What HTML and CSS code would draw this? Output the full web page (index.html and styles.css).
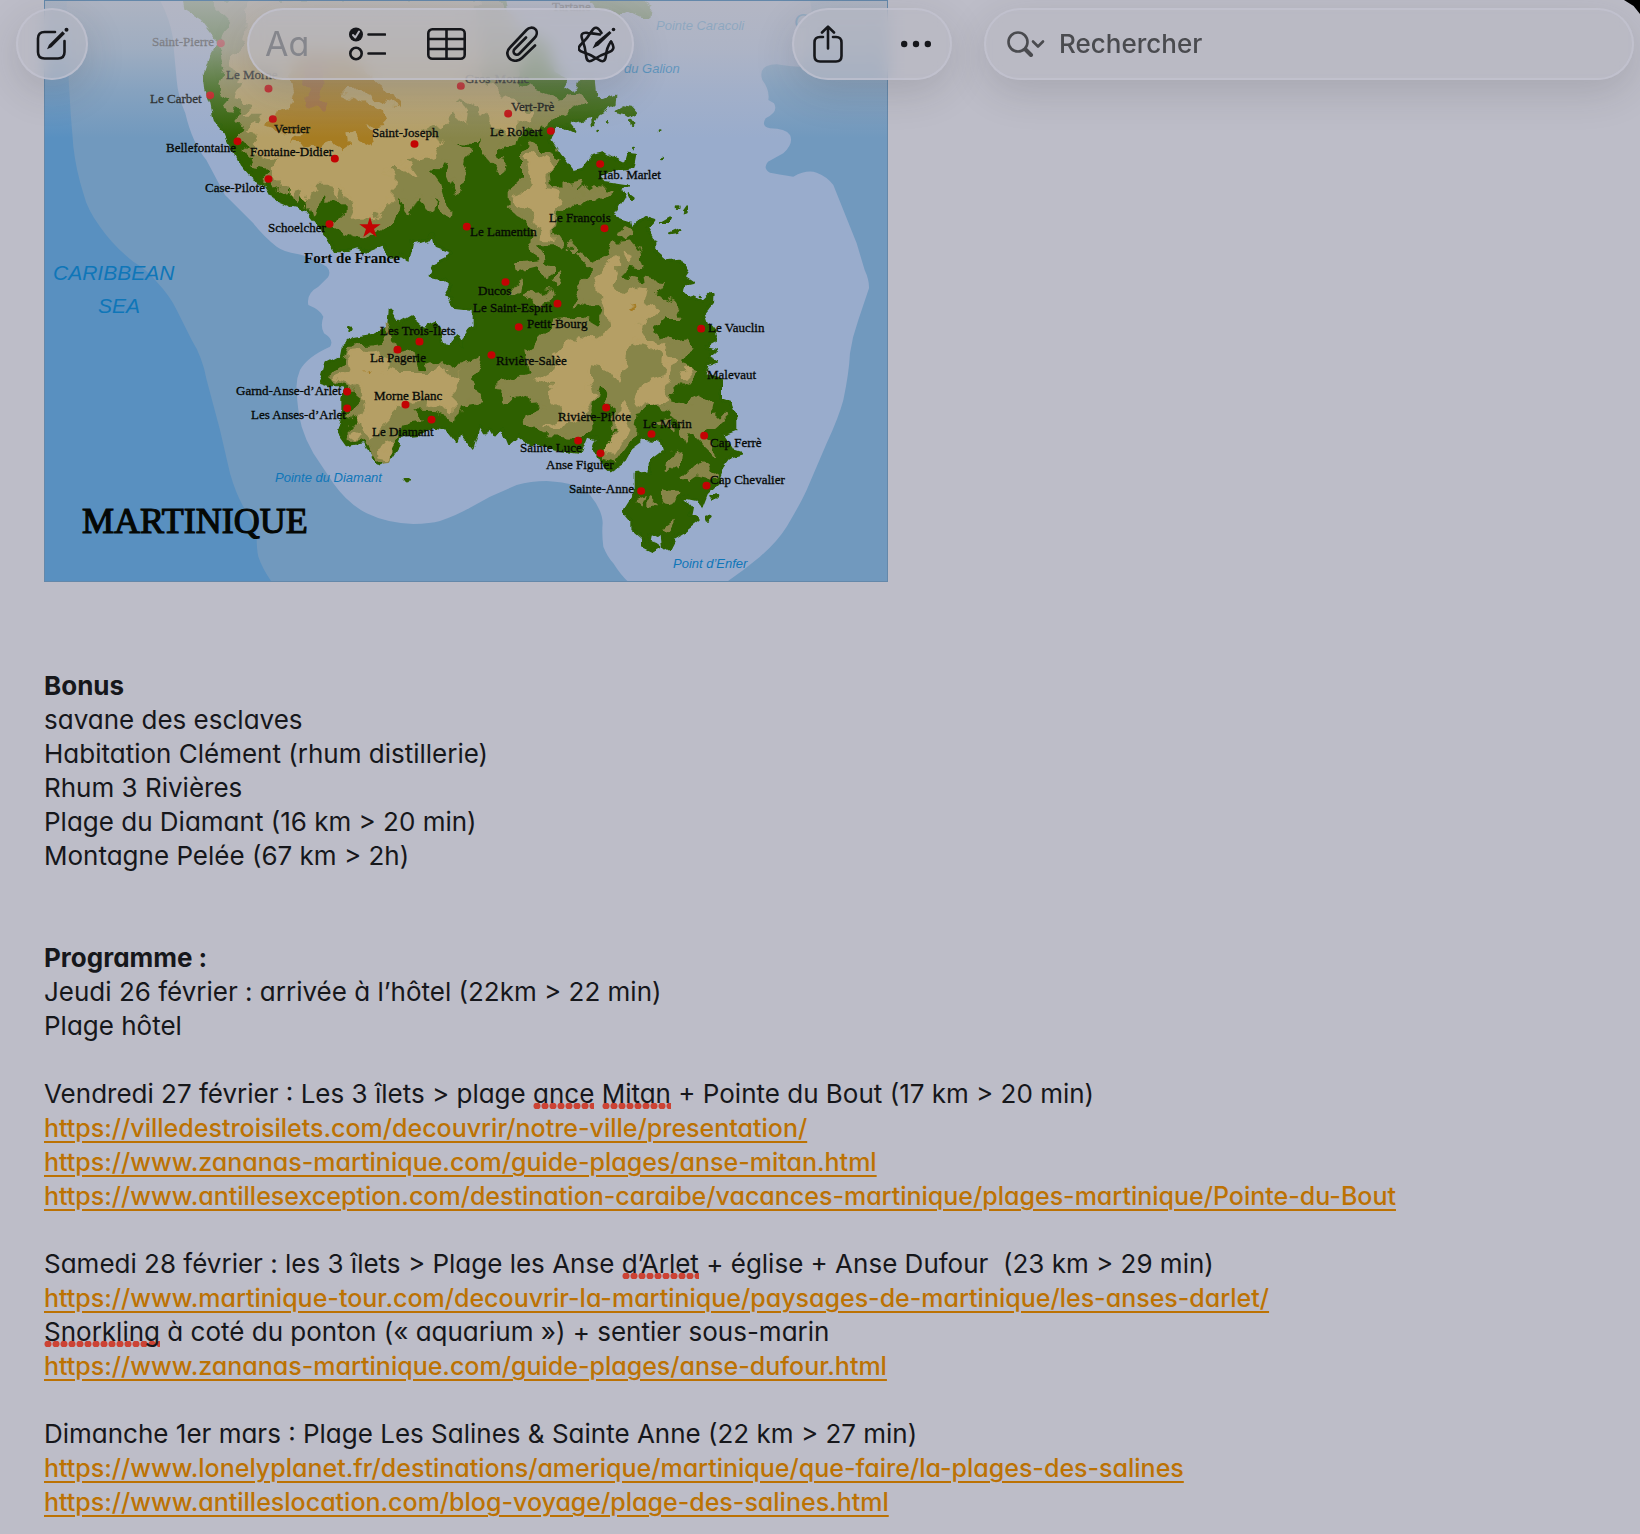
FILE: index.html
```html
<!DOCTYPE html>
<html lang="fr">
<head>
    <meta charset="UTF-8">
    <meta name="viewport" content="width=device-width, initial-scale=1.0">
    <title>Martinique</title>
    <link rel="stylesheet" href="styles.css">
</head>
<body>
    <header class="toolbar">
        <div class="pill pill-new">
            <button type="button" aria-label="Nouvelle note">
                <svg width="34" height="34" viewBox="0 0 34 34" class="icon">
                    <path d="M20 5H9.500Q3 5 3 11.500V25Q3 31.500 9.500 31.500H23Q29.500 31.500 29.500 25V14"/>
                    <path class="solid" d="M27.500 4.200L30 6.700L16.500 20.200L12 22.200L14 17.700Z"/>
                    <circle class="solid" cx="31.500" cy="2.800" r="2"/>
                </svg>
            </button>
        </div>

        <div class="pill pill-format">
            <button type="button" class="aa" aria-label="Format">Aa</button>
            <button type="button" aria-label="Liste de contrôle">
                <svg width="37" height="34" viewBox="0 0 37 34" class="icon">
                    <circle class="solid" cx="7" cy="7.500" r="7"/>
                    <path class="tick" d="M4 8L6.300 10.500L10 4.500"/>
                    <circle cx="7" cy="26.500" r="5.700"/>
                    <path d="M19.500 7.500H36M19.500 26.500H36"/>
                </svg>
            </button>
            <button type="button" aria-label="Tableau">
                <svg width="39" height="34" viewBox="0 0 39 34" class="icon">
                    <rect x="1.300" y="2.300" width="36.400" height="29.400" rx="4"/>
                    <path d="M19.500 2.300V31.700M1.300 12H37.700M1.300 22H37.700"/>
                </svg>
            </button>
            <button type="button" aria-label="Pièce jointe">
                <svg width="32" height="36" viewBox="0 0 32 36" class="icon">
                    <path d="M29 19.500L16 32C12 36 5.500 35.500 2.800 31.500C0.500 28 1 24.500 4 21.500L20.500 4C23 1.300 27 0.800 29.300 3.200C31.700 5.700 31 9.300 28.500 12L13.500 27.500C12 29 9.800 29 8.500 27.800C7.200 26.500 7.200 24.500 8.700 23L20 11.500"/>
                </svg>
            </button>
            <button type="button" aria-label="Outils d’écriture">
                <svg width="38" height="38" viewBox="0 0 38 38" class="icon">
                    <path d="M33 16.500Q38.800 24.700 30.700 27.200Q22.700 29.800 15.700 34.500Q8.800 39.200 8.100 30.800Q7.400 22.400 4.300 14.500Q1.300 6.700 9.600 7.900Q16 8.500 22 9.500"/>
                    <path d="M33 16.500Q28.600 22.400 27.900 30.800Q27.200 39.200 20.300 34.500Q13.300 29.800 5.300 27.300Q-2.800 24.700 3.400 19Q9.500 13.200 13.800 6Q18 -1.300 23.500 8"/>
                    <path class="solid" d="M31.500 6L33.500 8L20.500 20.500L14.500 23.500L17.500 17.500Z"/>
                    <circle class="solid" cx="35.500" cy="4.500" r="1.800"/>
                </svg>
            </button>
        </div>

        <div class="pill pill-share">
            <button type="button" aria-label="Partager">
                <svg width="30" height="38" viewBox="0 0 30 38" class="icon">
                    <path d="M10 12H7Q1.500 12 1.500 17.500V31Q1.500 36.500 7 36.500H23Q28.500 36.500 28.500 31V17.500Q28.500 12 23 12H20"/>
                    <path d="M15 23.500V1.800M9 7.500L15 1.600L21 7.500"/>
                </svg>
            </button>
            <button type="button" aria-label="Plus">
                <svg width="30" height="8" viewBox="0 0 30 8" class="icon">
                    <circle class="solid" cx="3.200" cy="4" r="3.200"/>
                    <circle class="solid" cx="15" cy="4" r="3.200"/>
                    <circle class="solid" cx="26.800" cy="4" r="3.200"/>
                </svg>
            </button>
        </div>

        <label class="pill search">
            <svg width="38" height="26" viewBox="0 0 38 26" class="icon search-icon">
                <circle cx="11" cy="11" r="9.500"/>
                <path class="handle" d="M18.500 18.500L24 24"/>
                <path d="M26 10.500L31 15.500L36 10.500"/>
            </svg>
            <input type="search" placeholder="Rechercher" aria-label="Rechercher">
        </label>
    </header>
    <div class="corner"></div>

    <main class="note">
        <figure class="map">
            <svg viewBox="0 0 844 582" role="img" aria-label="Carte de la Martinique">
                <defs>
                    <linearGradient id="fade" x1="0" y1="0" x2="0" y2="1">
                        <stop offset="0" stop-color="#b8b8c2" stop-opacity=".85"/>
                        <stop offset=".35" stop-color="#b8b8c2" stop-opacity=".65"/>
                        <stop offset=".65" stop-color="#b8b8c2" stop-opacity=".3"/>
                        <stop offset="1" stop-color="#b8b8c2" stop-opacity="0"/>
                    </linearGradient>
                    <!-- breaks up the straight edges of the relief -->
                    <filter id="rough" x="0" y="0" width="1" height="1">
                        <feTurbulence type="fractalNoise" baseFrequency=".025" numOctaves="2" seed="4"/>
                        <feDisplacementMap in="SourceGraphic" scale="50" xChannelSelector="R" yChannelSelector="G"/>
                    </filter>
                    <filter id="coast" x="0" y="0" width="1" height="1">
                        <feTurbulence type="fractalNoise" baseFrequency=".03" numOctaves="2" seed="9"/>
                        <feDisplacementMap in="SourceGraphic" scale="22" xChannelSelector="R" yChannelSelector="G"/>
                    </filter>
                </defs>
                <!-- relief, drawn at three times the label scale -->
                <g transform="scale(.33333)">
                    <rect class="deep" width="2532" height="1746"/>
                    <path class="mid" d="M68 0Q70 140 74 240L80 340L88 440Q96 510 118 580Q130 630 168 680Q210 740 268 785Q310 810 338 845Q380 890 398 930L443 1020Q475 1070 488 1140L528 1290L558 1420Q575 1480 598 1520Q630 1560 638 1610Q638 1650 643 1670Q655 1705 683 1746H2532V0Z"/>
                    <path class="shallow" d="M348 0Q378 60 386 110L398 240Q402 290 424 340Q445 430 487 480L543 585L628 670Q660 710 698 740Q720 756 760 762Q800 770 848 800Q862 815 852 832L823 860Q786 880 793 915Q830 930 838 950Q828 980 840 1000Q872 1020 858 1040Q790 1070 768 1110Q755 1140 758 1170Q760 1230 773 1280Q785 1320 808 1360L868 1450Q910 1510 968 1540Q1030 1570 1108 1572Q1160 1571 1188 1563Q1240 1545 1278 1523L1338 1490L1418 1455Q1460 1443 1508 1443Q1560 1446 1588 1455Q1620 1465 1638 1485Q1675 1530 1676 1570Q1673 1600 1678 1640Q1690 1670 1708 1690Q1730 1725 1753 1746H2048Q2100 1710 2148 1670Q2200 1625 2228 1580Q2270 1510 2288 1470L2348 1330Q2385 1250 2398 1200Q2415 1120 2418 1060Q2425 1010 2443 960L2475 865Q2476 840 2462 810L2438 730L2368 555Q2350 530 2318 518Q2288 508 2248 530Q2200 522 2178 518Q2155 505 2172 485L2218 460Q2250 430 2238 405Q2225 385 2178 385Q2150 380 2165 355Q2205 335 2190 310L2173 300Q2178 270 2155 240Q2140 195 2198 193Q2240 200 2268 200Q2320 110 2298 0Z"/>
                    <g filter="url(#coast)">
                        <rect class="frame" width="2532" height="1746"/>
                        <path class="land" d="M423 0L428 25L468 50L518 115L520 135L498 175L483 220L488 270L503 310L513 360L548 400L568 450L588 490L623 530L668 560L688 595L748 620L788 630L843 700L873 750L908 750L938 740L968 755L1018 735L1033 770L1073 765L1093 780L1103 730L1153 720L1168 700L1178 740L1218 755L1208 775L1168 795L1158 830L1203 840L1223 860L1208 885L1233 920L1278 925L1290 920V980L1278 990L1248 1030L1253 1035L1238 1010L1218 1040L1200 1037L1188 1005L1173 970L1140 985L1098 950L1063 970L1038 930L1033 980L988 1005L928 1015L893 1045L888 1070L848 1090L838 1125L828 1145L858 1155L908 1155L893 1195V1260L883 1300L908 1335L963 1325L988 1380L1008 1392L1038 1375L1063 1335L1068 1310L1118 1305L1168 1278L1208 1285L1238 1325L1248 1295L1288 1345L1308 1280L1323 1305L1338 1280L1353 1305L1373 1282L1393 1332L1423 1305L1458 1330L1538 1345L1608 1355L1628 1305L1658 1315L1648 1345L1663 1375L1703 1410L1733 1390L1758 1345L1798 1315L1848 1320L1858 1355L1818 1385V1415L1773 1420V1480L1738 1535L1763 1565V1585L1798 1615V1640L1823 1652L1848 1638L1813 1625L1818 1600L1838 1610L1853 1600L1858 1640L1873 1650L1893 1610L1918 1595L1963 1560L1938 1550L1943 1525L1913 1490L1958 1500L1973 1518L1988 1480L2018 1450L2038 1400L2063 1368L2093 1360L2063 1350L2033 1305L2073 1290V1250L2058 1210L2030 1200V1140L1983 1125L1993 1095L2018 1085L1990 1072L2018 1050L1983 1040L2018 1020L2008 995L1988 970L1978 940L2003 910L2005 880L1978 905L1948 890L1933 895L1918 880L1923 850L1943 845L1920 830L1930 815L1908 780L1868 785L1833 755V725L1808 685L1830 660L1803 652L1763 685L1758 665L1708 650L1728 610L1740 590L1728 565L1748 560L1683 550L1663 530L1718 510L1768 500L1775 465L1748 462L1740 490L1698 470L1683 460L1643 468L1613 508L1588 515L1548 465L1518 420L1533 380L1563 380L1593 395L1573 370L1648 348L1650 375L1663 340L1708 315L1710 288L1678 302L1653 285L1648 240L1613 240L1603 270L1583 280L1555 262L1568 240L1530 220L1500 120L1400 90L1380 0Z"/>
                        <path class="land" d="M1640 0L1660 25L1700 25L1720 45L1750 30L1790 50L1815 50L1820 20L1780 0Z"/>
                        <path class="land" d="M1713 335L1738 320L1765 325L1778 340L1768 345L1755 350L1740 340ZM1762 360L1770 372L1764 374ZM1752 580L1768 592L1762 602ZM1852 668L1880 652L1872 668ZM1876 702L1908 688L1900 698ZM1918 636L1928 622L1924 634ZM2000 1490L2022 1486L2008 1499ZM1987 1550L2002 1552L1992 1562ZM1082 1438L1094 1438L1088 1446ZM916 985L922 987L919 992Z"/>
                        <path class="land" d="M1686 367h1M1658 393h1M1845 395h1M1768 447h1M1852 477h1M1902 626h1M1971 888h2"/>
                    </g>

                    <g filter="url(#rough)">
                        <rect class="frame" width="2532" height="1746"/>
                        <path class="low" d="M500 0L560 60L545 110L530 150L545 200L530 260L555 300L540 320L600 330L570 370L600 380L590 410L620 430L600 450L640 470L620 500L680 510L668 540L700 535L690 570L740 560L760 605L790 575L808 645L828 580L858 610L903 600V645L868 680L928 705L988 710L1018 690L1058 640L1068 570L1098 650L1128 580L1153 635L1168 590L1208 655L1210 630L1188 560L1148 505L1188 510L1200 480L1228 550L1243 575L1263 500L1273 445L1223 420L1290 425L1308 390L1303 440L1338 480L1373 525L1378 500L1348 455L1383 425L1423 440L1433 390L1478 390L1508 365L1568 335L1618 300L1598 285L1538 300L1458 270L1418 260L1440 100L1360 0Z"/>
                        <path class="low" d="M1438 450L1468 435L1498 455L1543 475L1513 520L1518 565L1560 560L1608 550L1598 580L1658 560L1708 570L1658 600L1598 595L1538 640L1528 690L1558 735L1478 735L1518 800L1508 840L1488 795L1428 810L1423 790L1483 785L1463 730L1468 680L1438 650L1398 620V575L1438 540ZM1400 860L1430 840L1425 870L1405 885ZM1435 890L1520 875L1525 895L1480 915ZM1525 840L1545 815L1535 860ZM1570 750L1590 730L1600 740L1582 758ZM1720 700L1750 685L1760 700L1740 715Z"/>
                        <path class="low" d="M1598 760L1648 785L1688 770L1708 730L1763 725L1788 760L1798 795L1748 790L1728 830L1768 840L1848 850L1828 880L1883 905L1908 950L1858 950L1818 990L1868 1030L1928 1010L1948 1055L1908 1070V1100L1953 1115L1928 1145L1878 1175V1210L1938 1225L1958 1185L2003 1210L1995 1250L2048 1245L2008 1280L1983 1305L2018 1370L1978 1330L1938 1290L1928 1330L1908 1250L1838 1215L1778 1230L1768 1310L1718 1380L1678 1370L1718 1290L1708 1220L1658 1140L1638 1230L1648 1280L1588 1310L1518 1305L1443 1265L1448 1245L1508 1230L1458 1185L1398 1200L1358 1155L1458 1125L1448 1050L1478 1030L1518 990L1538 960L1608 950L1658 980L1678 940L1633 900L1588 915L1618 840L1648 810Z"/>
                        <path class="low" d="M848 1125L898 1090L908 1045L988 1040L1028 1035L1023 980L1043 1020L1058 1070L1108 1060L1118 1110L1188 1085L1218 1110L1278 1090L1313 1075L1288 1130L1308 1200L1248 1210L1238 1250L1168 1230L1098 1225L1138 1260L1068 1270L1058 1330L1038 1370L998 1375L973 1310L918 1325V1290L948 1260L918 1240L963 1195L918 1155Z"/>
                        <path class="low" d="M1890 1350L1908 1355L1905 1385L1898 1410L1878 1400ZM1918 1430L1958 1390L2018 1415L1998 1435L1958 1425L1935 1440ZM1858 1470L1898 1475L1883 1510L1858 1495ZM1773 1500L1800 1490L1790 1515ZM1820 1490L1838 1510L1820 1525ZM1865 1580L1888 1565L1880 1590ZM1840 1260L1880 1250L1885 1290Z"/>
                        <path class="high" d="M620 0L600 120L560 200L600 250L570 300L640 320L610 340L680 340L610 390L645 400L628 420L648 470L700 480L678 500L708 540L748 580L778 570L788 610L808 550L848 550L878 590L888 550L908 580L938 625L928 655L978 650L1018 620L1048 590V530L1028 500L1073 500L1113 530L1078 480L1138 475L1173 465L1193 430L1138 400L1198 370L1218 340L1258 365L1263 330L1233 285L1270 300L1308 320L1353 380L1398 410L1408 370L1448 360L1463 340L1408 300L1348 270L1308 240L1300 0Z"/>
                        <path class="high" d="M1448 465L1488 470L1528 490L1503 520L1508 570L1553 580L1523 660L1528 720L1498 715L1468 640L1413 605L1423 585L1468 570L1453 500Z"/>
                        <path class="high" d="M1708 770L1718 810L1708 860L1738 890L1778 860L1808 865L1798 910L1838 930L1778 980L1798 1010L1868 1055L1888 1080L1858 1160L1868 1195L1818 1220L1778 1195L1798 1150L1858 1130L1868 1070L1808 1030L1758 1020L1738 1090L1718 1140L1688 1100L1638 1090L1633 1130L1643 1200L1618 1250L1578 1270L1508 1280L1568 1250L1518 1200L1528 1160L1478 1145L1538 1110L1528 1060L1608 1010L1658 1020L1698 990L1688 940L1658 840ZM1733 1220L1758 1230L1738 1310L1708 1360L1683 1355L1718 1300ZM1740 765L1765 770L1750 785ZM1918 1115L1940 1110L1925 1130Z"/>
                        <path class="high" d="M868 1130L918 1110L908 1060L988 1055L1028 1070L1018 1110L1068 1120L1168 1120L1188 1100L1208 1130L1248 1125L1228 1170V1230L1138 1200L1048 1220L1038 1260L988 1310L938 1270L968 1230L958 1170L900 1140ZM1018 1320L1053 1340L1038 1365L1003 1360ZM925 1300L940 1305L930 1320Z"/>
                        <path class="ochre" d="M733 240L748 290L733 330L688 345L668 385L708 400L768 400L748 430L818 440L868 420L898 460L918 430L913 400L930 390L948 420L988 440L968 380L1033 375L1018 340L968 310L888 275L948 270L1010 300L1068 325L1048 290L988 240L960 200L900 150L760 160ZM960 1112L975 1108L968 1120ZM1758 925L1775 920L1768 934Z"/>
                        <path class="peak" d="M783 245L798 290L788 325L848 335L858 315L828 300L838 245L840 190H790Z"/>
                    </g>

                    <path class="town" d="M530 130h1M498 286h1M673 266h1M686 357h1M580 424h1M872 476h1M673 537h1M1111 432h1M856 672h1M1268 680h1M1250 258h1M1392 341h1M1520 393h1M1668 492h1M1681 685h1M1384 846h1M1540 911h1M1424 981h1M1971 986h1M1342 1065h1M1686 1223h1M1822 1302h1M1980 1307h1M1602 1322h1M1669 1360h1M1791 1473h1M1987 1457h1M1126 1025h1M1060 1049h1M909 1175h1M909 1225h1M1084 1214h1M1162 1259h1"/>
                    <path class="capital" d="M978 650L985 673L1010 673L990 687L998 711L978 697L958 711L966 687L946 673L971 673Z"/>
                </g>
                <g class="places">
                    <text x="108" y="46">Saint-Pierre</text>
                    <text x="106" y="103">Le Carbet</text>
                    <text x="182" y="79">Le Morne</text>
                    <text x="421" y="83">Gros-Morne</text>
                    <text x="508" y="11">Tartane</text>
                    <text x="230" y="133">Verrier</text>
                    <text x="122" y="152">Bellefontaine</text>
                    <text x="206" y="156">Fontaine-Didier</text>
                    <text x="328" y="137">Saint-Joseph</text>
                    <text x="161" y="192">Case-Pilote</text>
                    <text x="224" y="232">Schoelcher</text>
                    <text x="467" y="111">Vert-Prè</text>
                    <text x="446" y="136">Le Robert</text>
                    <text x="554" y="179">Hab. Marlet</text>
                    <text x="505" y="222">Le François</text>
                    <text x="426" y="236">Le Lamentin</text>
                    <text x="434" y="295">Ducos</text>
                    <text x="429" y="312">Le Saint-Esprit</text>
                    <text x="483" y="328">Petit-Bourg</text>
                    <text x="664" y="332">Le Vauclin</text>
                    <text x="663" y="379">Malevaut</text>
                    <text x="452" y="365">Rivière-Salèe</text>
                    <text x="514" y="421">Rivière-Pilote</text>
                    <text x="599" y="428">Le Marin</text>
                    <text x="666" y="447">Cap Ferrè</text>
                    <text x="476" y="452">Sainte Luce</text>
                    <text x="502" y="469">Anse Figuier</text>
                    <text x="666" y="484">Cap Chevalier</text>
                    <text x="525" y="493">Sainte-Anne</text>
                    <text x="336" y="335">Les Trois-Îlets</text>
                    <text x="326" y="362">La Pagerie</text>
                    <text x="192" y="395">Garnd-Anse-d’Arlet</text>
                    <text x="207" y="419">Les Anses-d’Arlet</text>
                    <text x="330" y="400">Morne Blanc</text>
                    <text x="328" y="436">Le Diamant</text>
                    <text x="260" y="263" class="city">Fort de France</text>
                    <text x="38" y="533" class="title">MARTINIQUE</text>
                </g>
                <g class="waters">
                    <text x="612" y="30">Pointe Caracoli</text>
                    <text x="580" y="73">du Galion</text>
                    <text x="231" y="482">Pointe du Diamant</text>
                    <text x="629" y="568">Point d’Enfer</text>
                    <text x="9" y="280" class="sea">CARIBBEAN</text>
                    <text x="54" y="313" class="sea">SEA</text>
                    <text x="750" y="28" class="sea">O</text>
                </g>
                <rect width="844" height="138" fill="url(#fade)"/>
            </svg>
        </figure>

        <section>
            <h2>Bonus</h2>
            <p>savane des esclaves</p>
            <p>Habitation Clément (rhum distillerie)</p>
            <p>Rhum 3 Rivières</p>
            <p>Plage du Diamant (16 km &gt; 20 min)</p>
            <p>Montagne Pelée (67 km &gt; 2h)</p>
        </section>

        <section class="programme">
            <h2>Programme :</h2>
            <p>Jeudi 26 février : arrivée à l’hôtel (22km &gt; 22 min)</p>
            <p>Plage hôtel</p>
        </section>

        <section class="day">
            <p>Vendredi 27 février : Les 3 îlets &gt; plage <span class="typo">ance</span> <span class="typo">Mitan</span> + Pointe du Bout (17 km &gt; 20 min)</p>
            <p><a href="https://villedestroisilets.com/decouvrir/notre-ville/presentation/">https://villedestroisilets.com/decouvrir/notre-ville/presentation/</a></p>
            <p><a href="https://www.zananas-martinique.com/guide-plages/anse-mitan.html">https://www.zananas-martinique.com/guide-plages/anse-mitan.html</a></p>
            <p><a href="https://www.antillesexception.com/destination-caraibe/vacances-martinique/plages-martinique/Pointe-du-Bout">https://www.antillesexception.com/destination-caraibe/vacances-martinique/plages-martinique/Pointe-du-Bout</a></p>
        </section>

        <section class="day">
            <p>Samedi 28 février : les 3 îlets &gt; Plage les Anse <span class="typo">d’Arlet</span> + église + Anse Dufour&nbsp; (23 km &gt; 29 min)</p>
            <p><a href="https://www.martinique-tour.com/decouvrir-la-martinique/paysages-de-martinique/les-anses-darlet/">https://www.martinique-tour.com/decouvrir-la-martinique/paysages-de-martinique/les-anses-darlet/</a></p>
            <p><span class="typo">Snorkling</span> à coté du ponton («&nbsp;aquarium&nbsp;») + sentier sous-marin</p>
            <p><a href="https://www.zananas-martinique.com/guide-plages/anse-dufour.html">https://www.zananas-martinique.com/guide-plages/anse-dufour.html</a></p>
        </section>

        <section class="day">
            <p>Dimanche 1er mars : Plage Les Salines &amp; Sainte Anne (22 km &gt; 27 min)</p>
            <p><a href="https://www.lonelyplanet.fr/destinations/amerique/martinique/que-faire/la-plages-des-salines">https://www.lonelyplanet.fr/destinations/amerique/martinique/que-faire/la-plages-des-salines</a></p>
            <p><a href="https://www.antilleslocation.com/blog-voyage/plage-des-salines.html">https://www.antilleslocation.com/blog-voyage/plage-des-salines.html</a></p>
        </section>
    </main>
</body>
</html>
```
FILE: styles.css
```css
* {
    box-sizing: border-box;
}

body {
    margin: 0;
    background-color: #bdbdc8;
    color: #16171b;
    font-family: Inter, "Liberation Sans", sans-serif;
    font-feature-settings: "cv11";
    font-size: 26px;
    line-height: 34px;
}

/* Toolbar floats over the note */
.toolbar {
    position: fixed;
    top: 0;
    left: 0;
    right: 0;
    z-index: 1;
    display: flex;
    padding: 8px 6px 0 16px;
}

.pill {
    display: flex;
    align-items: center;
    justify-content: space-between;
    height: 72px;
    border: 2px solid rgba(196, 196, 212, 0.6);
    border-radius: 36px;
    background-color: rgba(184, 184, 194, 0.6);
    backdrop-filter: blur(8px);
    box-shadow: 0 12px 40px rgba(40, 40, 40, 0.15);
}

.pill-new {
    width: 72px;
    margin-right: 159px;
    justify-content: center;
}

.pill-format {
    width: 387px;
    margin-right: 158px;
    padding: 0 16px;
}

.pill-share {
    width: 160px;
    margin-right: 32px;
    padding: 0 19px;
}

.pill button {
    display: flex;
    padding: 0;
    border: 0;
    background: none;
    color: #16171b;
    font: inherit;
}

.pill .aa {
    color: #85868c;
    font-size: 34px;
}

.icon {
    fill: none;
    stroke: currentColor;
    stroke-width: 2.6;
    stroke-linecap: round;
    stroke-linejoin: round;
}

.icon .solid {
    fill: currentColor;
    stroke: none;
}

.icon .tick {
    stroke: #b8b8c0;
    stroke-width: 2;
}

.search {
    flex: 1;
    min-width: 0;
    padding: 0 21px;
    gap: 14px;
    color: #4a4b4f;
}

.search-icon {
    flex: none;
}

.search-icon .handle {
    stroke-width: 4;
}

.search input {
    flex: 1;
    min-width: 0;
    padding: 0;
    border: 0;
    outline: 0;
    background: none;
    color: inherit;
    font: inherit;
    font-weight: 500;
}

.search input::placeholder {
    color: #4a4b4f;
    opacity: 1;
}

.corner {
    position: fixed;
    top: 0;
    right: 0;
    z-index: 2;
    width: 16px;
    height: 14px;
    background-color: #000;
    clip-path: polygon(0 0, 100% 0, 100% 100%, 60% 42%);
}

/* Note */
.note {
    padding: 0 44px 14px;
}

.note h2,
.note p {
    margin: 0;
    font-size: inherit;
}

.note a {
    color: #bc7203;
    font-size: 25px;
    font-weight: 500;
    text-decoration-thickness: 2px;
    text-underline-offset: 4px;
}

.programme {
    margin-top: 68px;
}

.day {
    margin-top: 34px;
}

.typo {
    background: radial-gradient(circle at 4px 3px, #cc4334 3px, transparent 4px) left bottom / 8px 6px repeat-x;
}

/* Map */
.map {
    max-width: 844px;
    margin: 0 0 87px;
}

.map svg {
    display: block;
    width: 100%;
    outline: 1px solid #6488aa;
    outline-offset: -1px;
}

.deep {
    fill: #5990c0;
}

.mid {
    fill: #7199be;
}

.shallow {
    fill: #99accc;
}

.frame {
    fill: none;
}

.land,
.low,
.high {
    stroke-width: 8;
    stroke-linecap: round;
    stroke-linejoin: round;
}

.land {
    fill: #2d6002;
    stroke: #2d6002;
}

.low {
    fill: #878548;
    stroke: #878548;
}

.high {
    fill: #b59f65;
    stroke: #b59f65;
}

.ochre {
    fill: #a67c24;
}

.peak {
    fill: #a06c36;
}

.town {
    stroke: #c30303;
    stroke-width: 23;
    stroke-linecap: round;
}

.capital {
    fill: #c30303;
}

.places {
    fill: #050805;
    font-family: "Liberation Serif", serif;
    font-size: 13px;
}

.places text {
    stroke: #050805;
    stroke-width: 0.3;
}

.places .city {
    font-size: 15px;
    font-weight: bold;
    stroke: none;
}

.places .title {
    font-size: 36px;
    stroke-width: 1.2;
}

.waters {
    fill: #0f76b8;
    font-family: "Liberation Sans", sans-serif;
    font-size: 13px;
    font-style: italic;
}

.waters .sea {
    font-size: 21px;
}
```
